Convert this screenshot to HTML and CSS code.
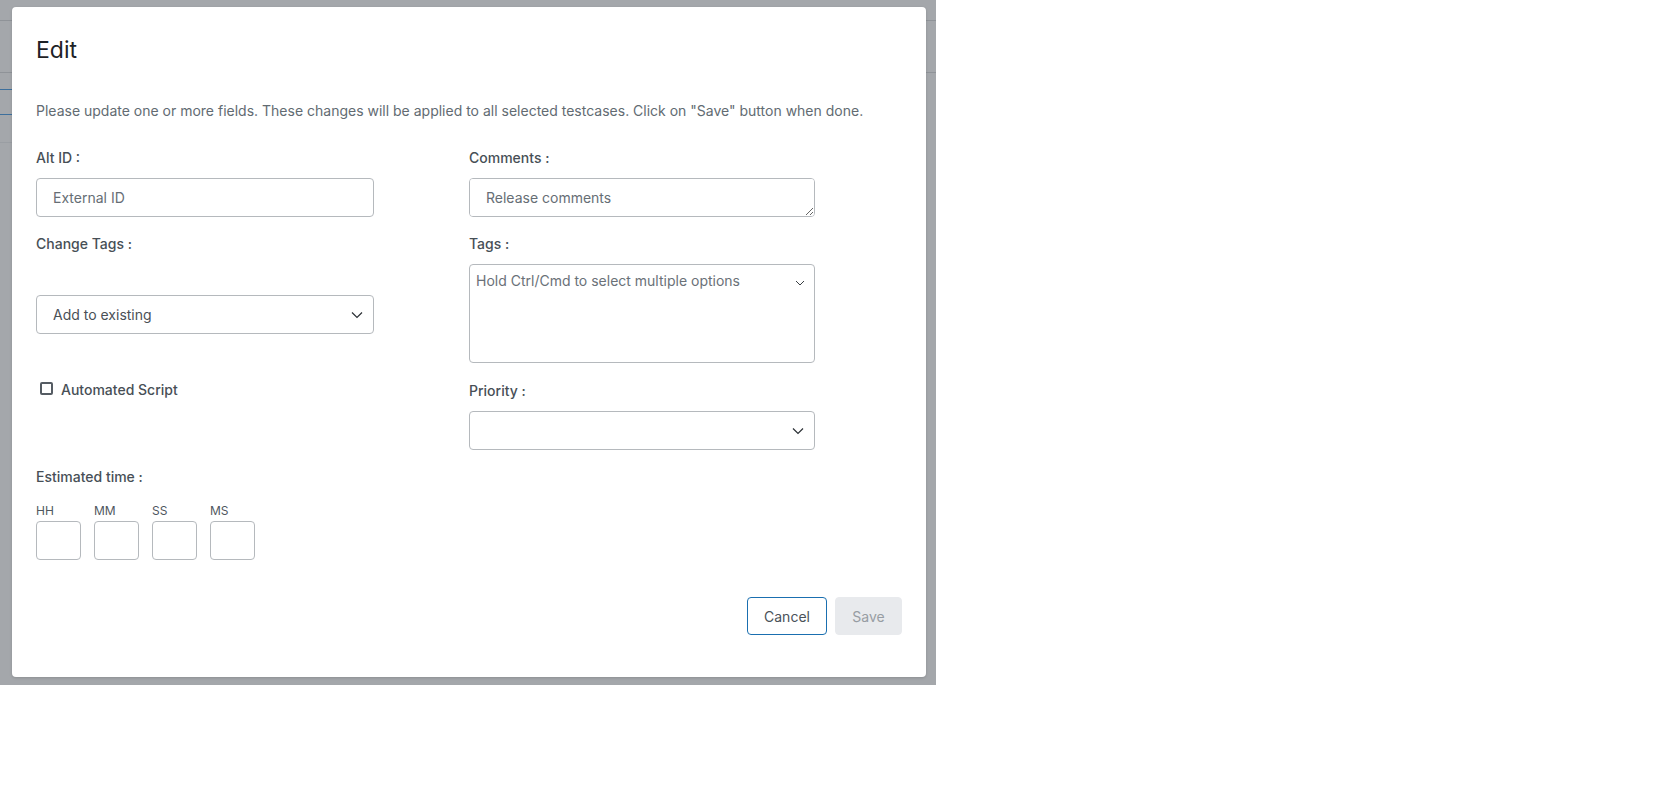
FILE: index.html
```html
<!DOCTYPE html>
<html>
<head>
    <title>Edit testcases</title>
    <link rel="stylesheet" href="styles.css">
</head>
<body>
    <div class="backdrop">
        <div class="modal">
            <h2 class="modal-title">Edit</h2>
            <p class="modal-desc">Please update one or more fields. These changes will be applied to all selected testcases. Click on "Save" button when done.</p>

            <div class="form-grid">
                <div class="field">
                    <label class="field-label">Alt ID :</label>
                    <input class="text-input left-w" type="text" placeholder="External ID">
                </div>
                <div class="field">
                    <label class="field-label">Comments :</label>
                    <textarea class="text-input area right-w" placeholder="Release comments"></textarea>
                </div>

                <div class="field">
                    <label class="field-label">Change Tags :</label>
                    <div class="select-wrap left-w change-tags">
                        <select class="select-input">
                            <option>Add to existing</option>
                        </select>
                        <svg class="chevron" width="12" height="8" viewBox="0 0 12 8"><path d="M1 1.5l5 5 5-5" fill="none" stroke="#2b3035" stroke-width="1.2"/></svg>
                    </div>
                </div>
                <div class="field">
                    <label class="field-label">Tags :</label>
                    <div class="multi-box right-w">
                        <span class="multi-hint">Hold Ctrl/Cmd to select multiple options</span>
                        <svg class="chevron-sm" width="10" height="6" viewBox="0 0 10 6"><path d="M1 1l4 4 4-4" fill="none" stroke="#3a3f44" stroke-width="1"/></svg>
                    </div>
                </div>

                <div class="field">
                    <label class="check-row">
                        <span class="check-box"></span>
                        Automated Script
                    </label>
                </div>
                <div class="field priority">
                    <label class="field-label">Priority :</label>
                    <div class="select-wrap right-w">
                        <select class="select-input">
                            <option></option>
                        </select>
                        <svg class="chevron" width="12" height="8" viewBox="0 0 12 8"><path d="M1 1.5l5 5 5-5" fill="none" stroke="#2b3035" stroke-width="1.2"/></svg>
                    </div>
                </div>

                <div class="field time-field">
                    <label class="field-label">Estimated time :</label>
                    <div class="time-row">
                        <div class="time-cell">
                            <span class="time-label">HH</span>
                            <input class="time-input" type="text">
                        </div>
                        <div class="time-cell">
                            <span class="time-label">MM</span>
                            <input class="time-input" type="text">
                        </div>
                        <div class="time-cell">
                            <span class="time-label">SS</span>
                            <input class="time-input" type="text">
                        </div>
                        <div class="time-cell">
                            <span class="time-label">MS</span>
                            <input class="time-input" type="text">
                        </div>
                    </div>
                </div>
            </div>

            <div class="modal-footer">
                <button class="btn btn-cancel">Cancel</button>
                <button class="btn btn-save" disabled>Save</button>
            </div>
        </div>
    </div>
</body>
</html>
```

FILE: styles.css
```css
body {
    margin: 0;
    background: #fff;
    font-family: Inter, "Noto Sans", sans-serif;
}

/* grey overlay on top of the page underneath */
.backdrop {
    width: 936px;
    height: 685px;
    box-sizing: border-box;
    padding: 7px 10px 0 12px;
    background-color: #a4a7ab;
    background-image:
        linear-gradient(#8f9398, #8f9398),
        linear-gradient(#8f9398, #8f9398),
        linear-gradient(#3d6f9c, #3d6f9c),
        linear-gradient(#3d6f9c, #3d6f9c),
        linear-gradient(#9a9ea3, #9a9ea3);
    background-size: 100% 1px, 100% 1px, 12px 1px, 12px 1px, 12px 1px;
    background-position: 0 20px, 0 72px, 0 89px, 0 114px, 0 142px;
    background-repeat: no-repeat;
}

.modal {
    background: #fff;
    border-radius: 4px;
    height: 670px;
    box-sizing: border-box;
    padding: 27px 24px 42px 24px;
    box-shadow: 0 1px 3px rgba(0, 0, 0, 0.15);
    display: flex;
    flex-direction: column;
}

.modal-title {
    margin: 0;
    font-size: 23px;
    line-height: 32px;
    font-weight: 400;
    color: #1e2226;
}

.modal-desc {
    margin: 35px 0 0 0;
    font-size: 14px;
    line-height: 20px;
    color: #626b72;
}

.form-grid {
    margin-top: 27px;
    display: grid;
    grid-template-columns: 433px 433px;
    row-gap: 17px;
}

.field {
    display: flex;
    flex-direction: column;
    align-items: flex-start;
}

.field-label {
    font-size: 14px;
    line-height: 20px;
    font-weight: 500;
    color: #474f56;
    margin-bottom: 10px;
}

.left-w { width: 338px; }
.right-w { width: 346px; }

.text-input {
    box-sizing: border-box;
    height: 39px;
    border: 1px solid #b5b9bd;
    border-radius: 4px;
    padding: 0 16px;
    font-family: Inter, "Noto Sans", sans-serif;
    font-size: 14px;
    color: #3a4046;
    outline: none;
}

.text-input::placeholder {
    color: #666e75;
}

.area {
    padding: 9px 16px;
    line-height: 20px;
    resize: vertical;
    min-height: 39px;
}

.select-wrap {
    position: relative;
}

.change-tags {
    margin-top: 31px;
}

.select-input {
    appearance: none;
    -webkit-appearance: none;
    width: 100%;
    height: 39px;
    box-sizing: border-box;
    border: 1px solid #b5b9bd;
    border-radius: 4px;
    background: #fff;
    padding: 0 16px;
    font-family: Inter, "Noto Sans", sans-serif;
    font-size: 14px;
    color: #4a5056;
    outline: none;
}

.chevron {
    position: absolute;
    right: 11px;
    top: 16px;
    pointer-events: none;
}

.multi-box {
    position: relative;
    box-sizing: border-box;
    height: 99px;
    border: 1px solid #b5b9bd;
    border-radius: 4px;
    padding: 5px 6px;
}

.multi-hint {
    font-size: 14px;
    line-height: 20px;
    color: #6a7178;
}

.chevron-sm {
    position: absolute;
    right: 9px;
    top: 15px;
}

.check-row {
    display: flex;
    align-items: center;
    gap: 8px;
    margin-left: 4px;
    font-size: 14px;
    line-height: 20px;
    font-weight: 500;
    color: #474f56;
}

.check-box {
    width: 13px;
    height: 13px;
    box-sizing: border-box;
    border: 2px solid #555c63;
    border-radius: 2px;
    margin-top: -3px;
}

.priority {
    margin-top: 1px;
}

.time-field .field-label {
    margin-bottom: 16px;
}

.time-row {
    display: flex;
    gap: 13px;
}

.time-cell {
    display: flex;
    flex-direction: column;
}

.time-label {
    font-size: 12px;
    line-height: 16px;
    color: #4f575e;
    margin-bottom: 2px;
}

.time-input {
    box-sizing: border-box;
    width: 45px;
    height: 39px;
    border: 1px solid #b5b9bd;
    border-radius: 4px;
    outline: none;
}

.modal-footer {
    margin-top: auto;
    display: flex;
    justify-content: flex-end;
    gap: 8px;
}

.btn {
    height: 38px;
    box-sizing: border-box;
    border-radius: 4px;
    font-family: Inter, "Noto Sans", sans-serif;
    font-size: 14px;
    padding: 0 15px;
}

.btn-cancel {
    width: 80px;
    background: #fff;
    border: 1px solid #1a6fb0;
    color: #4a5259;
    cursor: pointer;
}

.btn-save {
    width: 67px;
    background: #e8eaed;
    border: 1px solid #e8eaed;
    color: #979da3;
}
```
